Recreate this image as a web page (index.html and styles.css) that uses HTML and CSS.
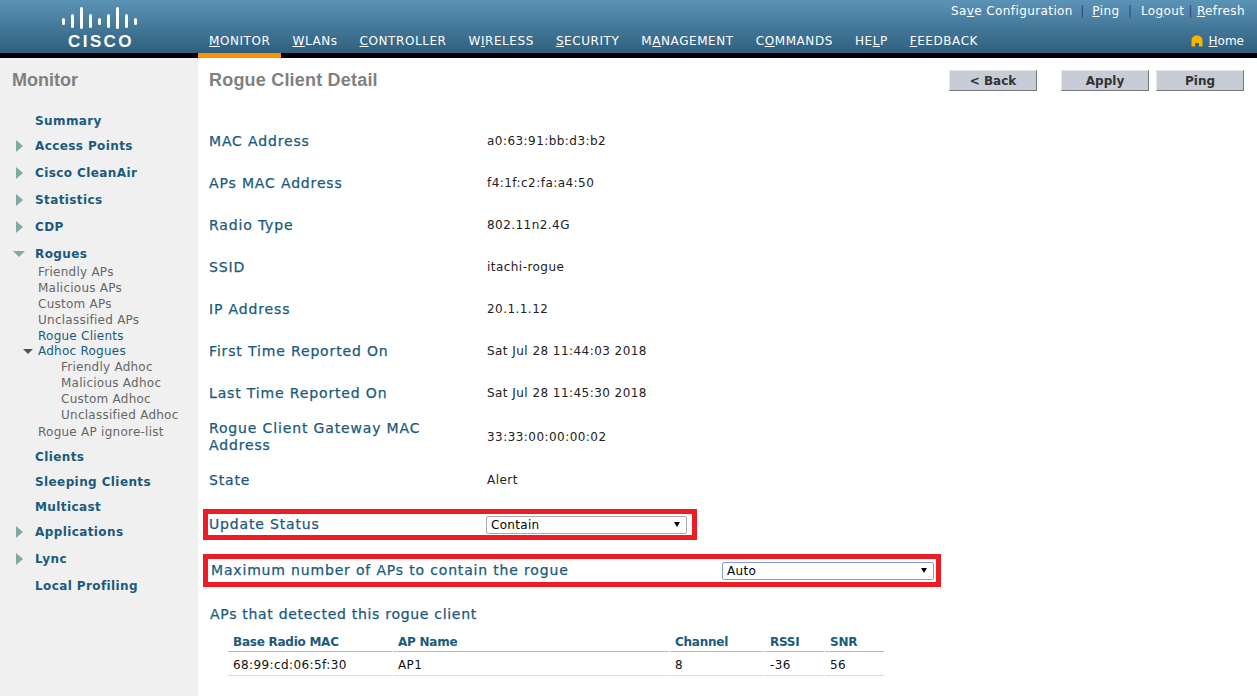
FILE: index.html
```html
<!DOCTYPE html>
<html lang="en">
<head>
  <meta charset="UTF-8">
  <title>Rogue Client Detail</title>
  <link rel="stylesheet" href="styles.css">
</head>
<body>

  <header class="topbar">
    <div class="logo">
      <svg class="logo-bars" width="76" height="22" viewBox="0 0 76 22">
        <rect x="0" y="11" width="3" height="7" rx="1.500"/><rect x="9" y="7" width="3" height="14" rx="1.500"/>
        <rect x="18" y="0" width="3" height="22" rx="1.500"/><rect x="27" y="7" width="3" height="14" rx="1.500"/>
        <rect x="36" y="11" width="3" height="7" rx="1.500"/><rect x="45" y="7" width="3" height="14" rx="1.500"/>
        <rect x="54" y="0" width="3" height="22" rx="1.500"/><rect x="63" y="7" width="3" height="14" rx="1.500"/>
        <rect x="72" y="11" width="3" height="7" rx="1.500"/>
      </svg>
      <div class="logo-text">CISCO</div>
    </div>
    <nav class="mainnav">
      <a class="active"><u>M</u>ONITOR</a>
      <a><u>W</u>LANs</a>
      <a><u>C</u>ONTROLLER</a>
      <a>W<u>I</u>RELESS</a>
      <a><u>S</u>ECURITY</a>
      <a>M<u>A</u>NAGEMENT</a>
      <a>C<u>O</u>MMANDS</a>
      <a>HE<u>L</u>P</a>
      <a><u>F</u>EEDBACK</a>
    </nav>
    <div class="toplinks">
      <a>Sa<u>v</u>e Configuration</a><span class="sep narrow">|</span>
      <a><u>P</u>ing</a><span class="sep">|</span>
      <a>Lo<u>g</u>out</a><span class="sep tight">|</span>
      <a><u>R</u>efresh</a>
    </div>
    <a class="home">
      <svg width="12" height="12" viewBox="0 0 12 12"><path d="M0.500 11.500V5.500C0.500 2.500 3 0.500 6 0.500s5.500 2 5.500 5v6H8V8H4v3.500z" fill="#f7b500"/></svg>
      <span><u>H</u>ome</span>
    </a>
  </header>

  <div class="page">
    <aside class="sidebar">
      <h2>Monitor</h2>
      <ul class="menu">
        <li class="item">Summary</li>
        <li class="item closed">Access Points</li>
        <li class="item closed">Cisco CleanAir</li>
        <li class="item closed">Statistics</li>
        <li class="item closed">CDP</li>
        <li class="item open">Rogues</li>
        <li class="sub">Friendly APs</li>
        <li class="sub">Malicious APs</li>
        <li class="sub">Custom APs</li>
        <li class="sub">Unclassified APs</li>
        <li class="sub current">Rogue Clients</li>
        <li class="sub current adhoc">Adhoc Rogues</li>
        <li class="sub deep">Friendly Adhoc</li>
        <li class="sub deep">Malicious Adhoc</li>
        <li class="sub deep">Custom Adhoc</li>
        <li class="sub deep">Unclassified Adhoc</li>
        <li class="sub ignore">Rogue AP ignore-list</li>
        <li class="item after-sub">Clients</li>
        <li class="item">Sleeping Clients</li>
        <li class="item">Multicast</li>
        <li class="item closed">Applications</li>
        <li class="item closed">Lync</li>
        <li class="item">Local Profiling</li>
      </ul>
    </aside>

    <main class="content">
      <div class="title-row">
        <h1>Rogue Client Detail</h1>
        <div class="actions">
          <button class="back">&lt; Back</button>
          <button>Apply</button>
          <button>Ping</button>
        </div>
      </div>

      <dl class="details">
        <div class="row"><dt>MAC Address</dt><dd>a0:63:91:bb:d3:b2</dd></div>
        <div class="row"><dt>APs MAC Address</dt><dd>f4:1f:c2:fa:a4:50</dd></div>
        <div class="row"><dt>Radio Type</dt><dd>802.11n2.4G</dd></div>
        <div class="row"><dt>SSID</dt><dd>itachi-rogue</dd></div>
        <div class="row"><dt>IP Address</dt><dd>20.1.1.12</dd></div>
        <div class="row"><dt>First Time Reported On</dt><dd>Sat Jul 28 11:44:03 2018</dd></div>
        <div class="row"><dt>Last Time Reported On</dt><dd>Sat Jul 28 11:45:30 2018</dd></div>
        <div class="row gateway"><dt>Rogue Client Gateway MAC Address</dt><dd>33:33:00:00:00:02</dd></div>
        <div class="row state"><dt>State</dt><dd>Alert</dd></div>
      </dl>

      <div class="redbox status-box">
        <label>Update Status</label>
        <div class="select-wrap status-select">
          <select><option>Contain</option></select>
        </div>
      </div>

      <div class="redbox max-box">
        <label>Maximum number of APs to contain the rogue</label>
        <div class="select-wrap max-select">
          <select><option>Auto</option></select>
        </div>
      </div>

      <h3>APs that detected this rogue client</h3>
      <table class="aps">
        <thead>
          <tr><th class="c-mac">Base Radio MAC</th><th class="c-name">AP Name</th><th class="c-chan">Channel</th><th class="c-rssi">RSSI</th><th class="c-snr">SNR</th></tr>
        </thead>
        <tbody>
          <tr><td>68:99:cd:06:5f:30</td><td>AP1</td><td>8</td><td>-36</td><td>56</td></tr>
        </tbody>
      </table>
    </main>
  </div>

</body>
</html>
```

FILE: styles.css
```css
* { box-sizing: border-box; }
html, body { height: 100%; }
body { margin: 0; font-family: "DejaVu Sans", Verdana, sans-serif; font-size: 12px; color: #000; background: #fff; overflow: hidden; }
ul { list-style: none; margin: 0; padding: 0; }
a { color: inherit; }

/* top bar */
.topbar { position: relative; height: 58px; background: linear-gradient(#5b93b6, #2f5f7e 53px, #000 53px); color: #fff; }
.logo { position: absolute; left: 62px; top: 7px; width: 76px; }
.logo-bars { display: block; fill: #fff; }
.logo-text { margin-top: 4px; padding-left: 2px; text-align: center; font: bold 17px "Liberation Sans", sans-serif; letter-spacing: 2.400px; line-height: 17px; }
.mainnav { position: absolute; left: 198px; bottom: 0; display: flex; height: 58px; align-items: flex-end; font-size: 12px; letter-spacing: 0.570px; }
.mainnav a { height: 24px; padding: 0 11px; line-height: 14px; }
.mainnav a.active { box-shadow: inset 0 -5px 0 #ff9000; }
.toplinks { position: absolute; right: 12px; top: 4px; display: flex; font-size: 12px; line-height: 15px; letter-spacing: 0.400px; }
.toplinks .sep { color: #3a3d75; margin: 0 8.500px; }
.toplinks .sep.narrow { margin: 0 7.500px; }
.toplinks .sep.tight { margin: 0 4px; }
.home { position: absolute; right: 13px; top: 32px; display: flex; gap: 6px; font-size: 12px; line-height: 18px; align-items: center; }

/* layout */
.page { display: flex; height: 638px; }
.sidebar { width: 198px; flex: none; background: #f0f0f0; padding: 12px 0 0 12px; }
.sidebar h2 { margin: 0; font: bold 18px/20px "Liberation Sans", sans-serif; color: #808080; }
.menu { margin-top: 19px; }
.item { position: relative; padding-left: 23px; font-size: 12px; font-weight: bold; letter-spacing: 0.400px; color: #1a5a7c; height: 25px; line-height: 25px; }
.closed { margin-bottom: 2px; }
.open { margin-bottom: -3px; }
.after-sub { margin-top: 5px; }
.sub { padding-left: 26px; height: 16px; line-height: 16px; font-size: 12px; letter-spacing: 0.250px; color: #666; white-space: nowrap; }
.sub.current { color: #1a5a7c; }
.sub.deep { padding-left: 49px; }
.sub.adhoc { position: relative; margin-top: -1px; }
.sub.ignore { margin-top: 1px; }
.adhoc::before { content: ""; position: absolute; left: 11px; top: 6px; border: 5px solid transparent; border-top: 5px solid #555; border-bottom: 0; }
.closed::before { content: ""; position: absolute; left: 4px; top: 6px; border: 6px solid transparent; border-left: 7px solid #7fa9a5; border-right: 0; }
.open::before { content: ""; position: absolute; left: 1px; top: 9px; border: 6px solid transparent; border-top: 6px solid #7fa9a5; border-bottom: 0; }

/* content */
.content { flex: 1; padding: 0 0 0 11px; }
.title-row { display: flex; justify-content: space-between; height: 62px; }
.title-row h1 { margin: 12px 0 0; font: bold 18px/20px "Liberation Sans", sans-serif; letter-spacing: 0.200px; color: #808080; }
.actions { display: flex; margin: 12px 13px 0 0; gap: 7px; }
.actions button { width: 88px; height: 21px; padding: 0; background: #c8ccd6; color: #333; border: 1px solid; border-color: #e4e6ea #777 #777 #e4e6ea; font: bold 12px "DejaVu Sans", sans-serif; }
.actions .back { margin-right: 17px; }

.details { margin: 0; }
.row { display: flex; align-items: center; height: 42px; }
.row dt { width: 278px; font-size: 14px; letter-spacing: 0.850px; line-height: 17px; color: #1a5a7c; -webkit-text-stroke: 0.250px #1a5a7c; padding-right: 50px; }
.row dd { margin: 0; font-size: 12px; letter-spacing: 0.450px; color: #222; }
.row.gateway { height: 44px; padding-top: 2px; }
.row.state { height: 44px; }

.redbox { display: flex; align-items: center; border: 5px solid #ee1c25; color: #1a5a7c; font-size: 14px; letter-spacing: 0.830px; -webkit-text-stroke: 0.250px #1a5a7c; }
.redbox label { margin-bottom: 2px; }
.status-box { width: 494px; height: 31px; margin: 7px 0 0 -6px; }
.status-box label { width: 278px; padding-left: 1px; }
.max-box { width: 738px; height: 33px; margin: 14px 0 0 -6px; }
.max-box label { width: 514px; padding-left: 3px; white-space: nowrap; }
.select-wrap { position: relative; -webkit-text-stroke: 0; }
.select-wrap::after { content: ""; position: absolute; right: 7px; top: 6px; border: 3.500px solid transparent; border-top: 5px solid #000; border-bottom: 0; }
.select-wrap select { display: block; width: 100%; height: 100%; appearance: none; padding: 0 0 0 4px; border: 1px solid #aaa; border-radius: 2px; background: #fff; color: #000; font: 12px "DejaVu Sans", sans-serif; letter-spacing: 0.300px; }
.status-select { width: 201px; height: 18px; }
.max-select { width: 212px; height: 18px; }
.max-select select { border: 1px solid #7a9fe0; }

.content h3 { margin: 19px 0 0 1px; font-size: 14px; letter-spacing: 0.700px; font-weight: normal; line-height: 17px; color: #1a5a7c; -webkit-text-stroke: 0.250px #1a5a7c; }
.aps { margin: 9px 0 0 18px; border-collapse: separate; border-spacing: 1px 0; table-layout: fixed; width: 658px; }
.aps th { height: 20px; padding: 0 0 0 5px; text-align: left; font-size: 12px; letter-spacing: -0.250px; color: #1a5a7c; border-bottom: 1px solid #bbb; }
.aps td { height: 24px; padding: 3px 0 0 5px; font-size: 12px; letter-spacing: 0.400px; color: #111; border-bottom: 1px solid #ddd; }
.c-mac { width: 164px; }
.c-name { width: 276px; }
.c-chan { width: 94px; }
.c-rssi { width: 59px; }
.c-snr { width: 59px; }
```
